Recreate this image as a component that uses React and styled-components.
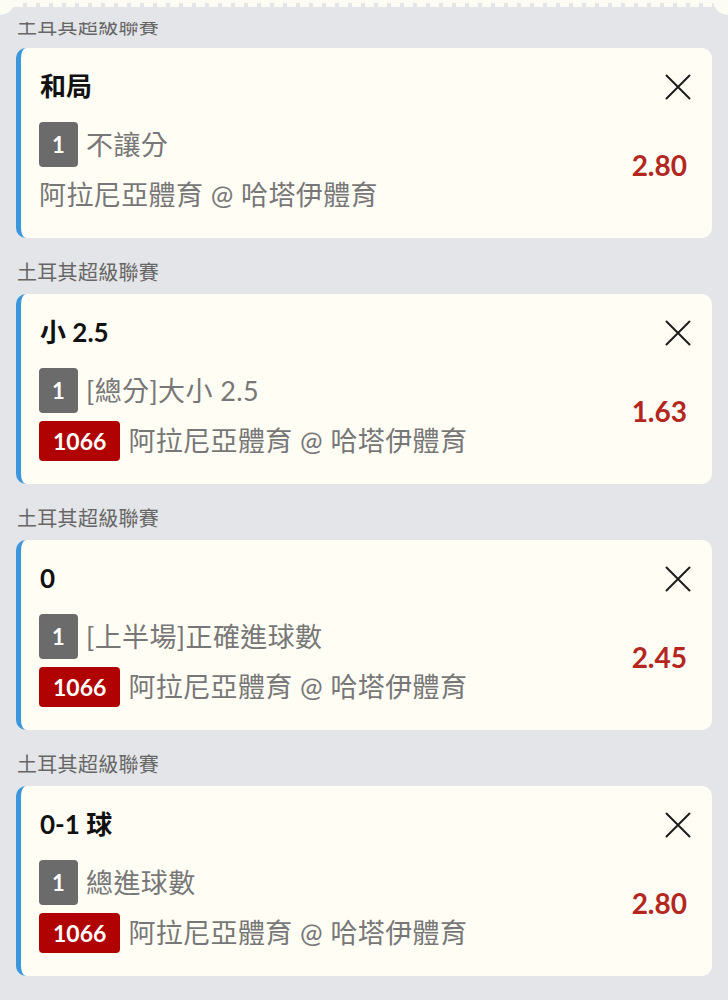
import React from 'react'
import styled, { createGlobalStyle } from 'styled-components'

const GlobalStyle = createGlobalStyle`
  html, body {
    margin: 0;
    padding: 0;
    background: #e4e5e8;
  }
  body {
    font-family: 'Lato', 'Noto Sans CJK TC', sans-serif;
  }
`

const bets = [
  {
    league: '土耳其超級聯賽',
    title: '和局',
    market: '不讓分',
    code: null,
    match: '阿拉尼亞體育 @ 哈塔伊體育',
    odds: '2.80',
  },
  {
    league: '土耳其超級聯賽',
    title: '小 2.5',
    market: '[總分]大小 2.5',
    code: '1066',
    match: '阿拉尼亞體育 @ 哈塔伊體育',
    odds: '1.63',
  },
  {
    league: '土耳其超級聯賽',
    title: '0',
    market: '[上半場]正確進球數',
    code: '1066',
    match: '阿拉尼亞體育 @ 哈塔伊體育',
    odds: '2.45',
  },
  {
    league: '土耳其超級聯賽',
    title: '0-1 球',
    market: '總進球數',
    code: '1066',
    match: '阿拉尼亞體育 @ 哈塔伊體育',
    odds: '2.80',
  },
]

const CloseIcon = () => (
  <svg width='26' height='26' viewBox='0 0 26 26' fill='none'>
    <path d='M1.5 1.5L24.5 24.5M24.5 1.5L1.5 24.5' stroke='#1c1c1c' strokeWidth='2' strokeLinecap='round' />
  </svg>
)

const App = () => {
  return (
    <>
      <GlobalStyle />
      <Page>
        <TopBar>
          <Perforation />
        </TopBar>
        <List>
          {bets.map((bet, i) => (
            <Section key={i}>
              <League>{bet.league}</League>
              <Card>
                <Header>
                  <Title>{bet.title}</Title>
                  <CloseBtn type='button'>
                    <CloseIcon />
                  </CloseBtn>
                </Header>
                <Body>
                  <Rows>
                    <Row>
                      <Badge>1</Badge>
                      <RowText>{bet.market}</RowText>
                    </Row>
                    <Row>
                      {bet.code && <Badge $red>{bet.code}</Badge>}
                      <RowText>{bet.match}</RowText>
                    </Row>
                  </Rows>
                  <Odds>{bet.odds}</Odds>
                </Body>
              </Card>
            </Section>
          ))}
        </List>
      </Page>
    </>
  )
}

export default App

const Page = styled.div`
  width: 728px;
  min-height: 1000px;
  background: #e4e5e8;
  overflow: hidden;
`

const TopBar = styled.div`
  position: relative;
  z-index: 2;
  height: 22px;
  background: #e4e5e8;
`

const Perforation = styled.div`
  position: relative;
  height: 7px;
  margin: 0 14px;
  background:
    repeating-linear-gradient(
      to right,
      #fcfbf4 0 9px,
      transparent 9px 13px
    ) bottom / 100% 4px no-repeat,
    linear-gradient(#fcfbf4, #fcfbf4) top / 100% 3px no-repeat;

  &::before,
  &::after {
    content: '';
    position: absolute;
    top: -15px;
    width: 30px;
    height: 30px;
    border-radius: 50%;
    background: #fcfbf4;
  }

  &::before {
    left: -29px;
  }

  &::after {
    right: -29px;
  }
`

const List = styled.div`
  margin-top: -10px;
  padding: 0 16px;
  display: flex;
  flex-direction: column;
`

const Section = styled.section`
  display: flex;
  flex-direction: column;

  & + & {
    margin-top: 20px;
  }
`

const League = styled.div`
  font-size: 20px;
  line-height: 28px;
  color: #666;
  padding-left: 1px;
  margin-bottom: 8px;
  letter-spacing: 0.3px;
`

const Card = styled.div`
  box-sizing: border-box;
  height: 190px;
  background: #fffdf4;
  border-left: 5px solid #3b97dd;
  border-radius: 10px;
  padding: 18px 21px 23px 18px;
  display: flex;
  flex-direction: column;
`

const Header = styled.div`
  display: flex;
  align-items: center;
  justify-content: space-between;
  height: 40px;
`

const Title = styled.div`
  font-size: 26px;
  font-weight: 700;
  color: #111;
  line-height: 40px;
  padding-left: 1px;
`

const CloseBtn = styled.button`
  border: 0;
  background: none;
  padding: 0;
  display: flex;
  margin-top: 2px;
`

const Body = styled.div`
  margin-top: 16px;
  display: flex;
  align-items: center;
  justify-content: space-between;
`

const Rows = styled.div`
  display: flex;
  flex-direction: column;
  gap: 8px;
`

const Row = styled.div`
  display: flex;
  align-items: center;
  gap: 8px;
  min-height: 40px;
`

const Badge = styled.span`
  box-sizing: border-box;
  display: inline-flex;
  align-items: center;
  justify-content: center;
  height: ${(p) => (p.$red ? '40px' : '45px')};
  min-width: 39px;
  padding: 0 ${(p) => (p.$red ? '14px' : '0')};
  border-radius: 4px;
  background: ${(p) => (p.$red ? '#b00202' : '#6b6b6b')};
  color: #fff;
  font-family: 'Lato', sans-serif;
  font-weight: 700;
  font-size: ${(p) => (p.$red ? '23px' : '22px')};
`

const RowText = styled.span`
  font-size: 27px;
  letter-spacing: 0.4px;
  color: #777;
  line-height: 40px;
  white-space: nowrap;
`

const Odds = styled.div`
  font-family: 'Lato', sans-serif;
  font-size: 28px;
  font-weight: 700;
  color: #b3271f;
  margin-right: 4px;
  margin-top: -8px;
`
